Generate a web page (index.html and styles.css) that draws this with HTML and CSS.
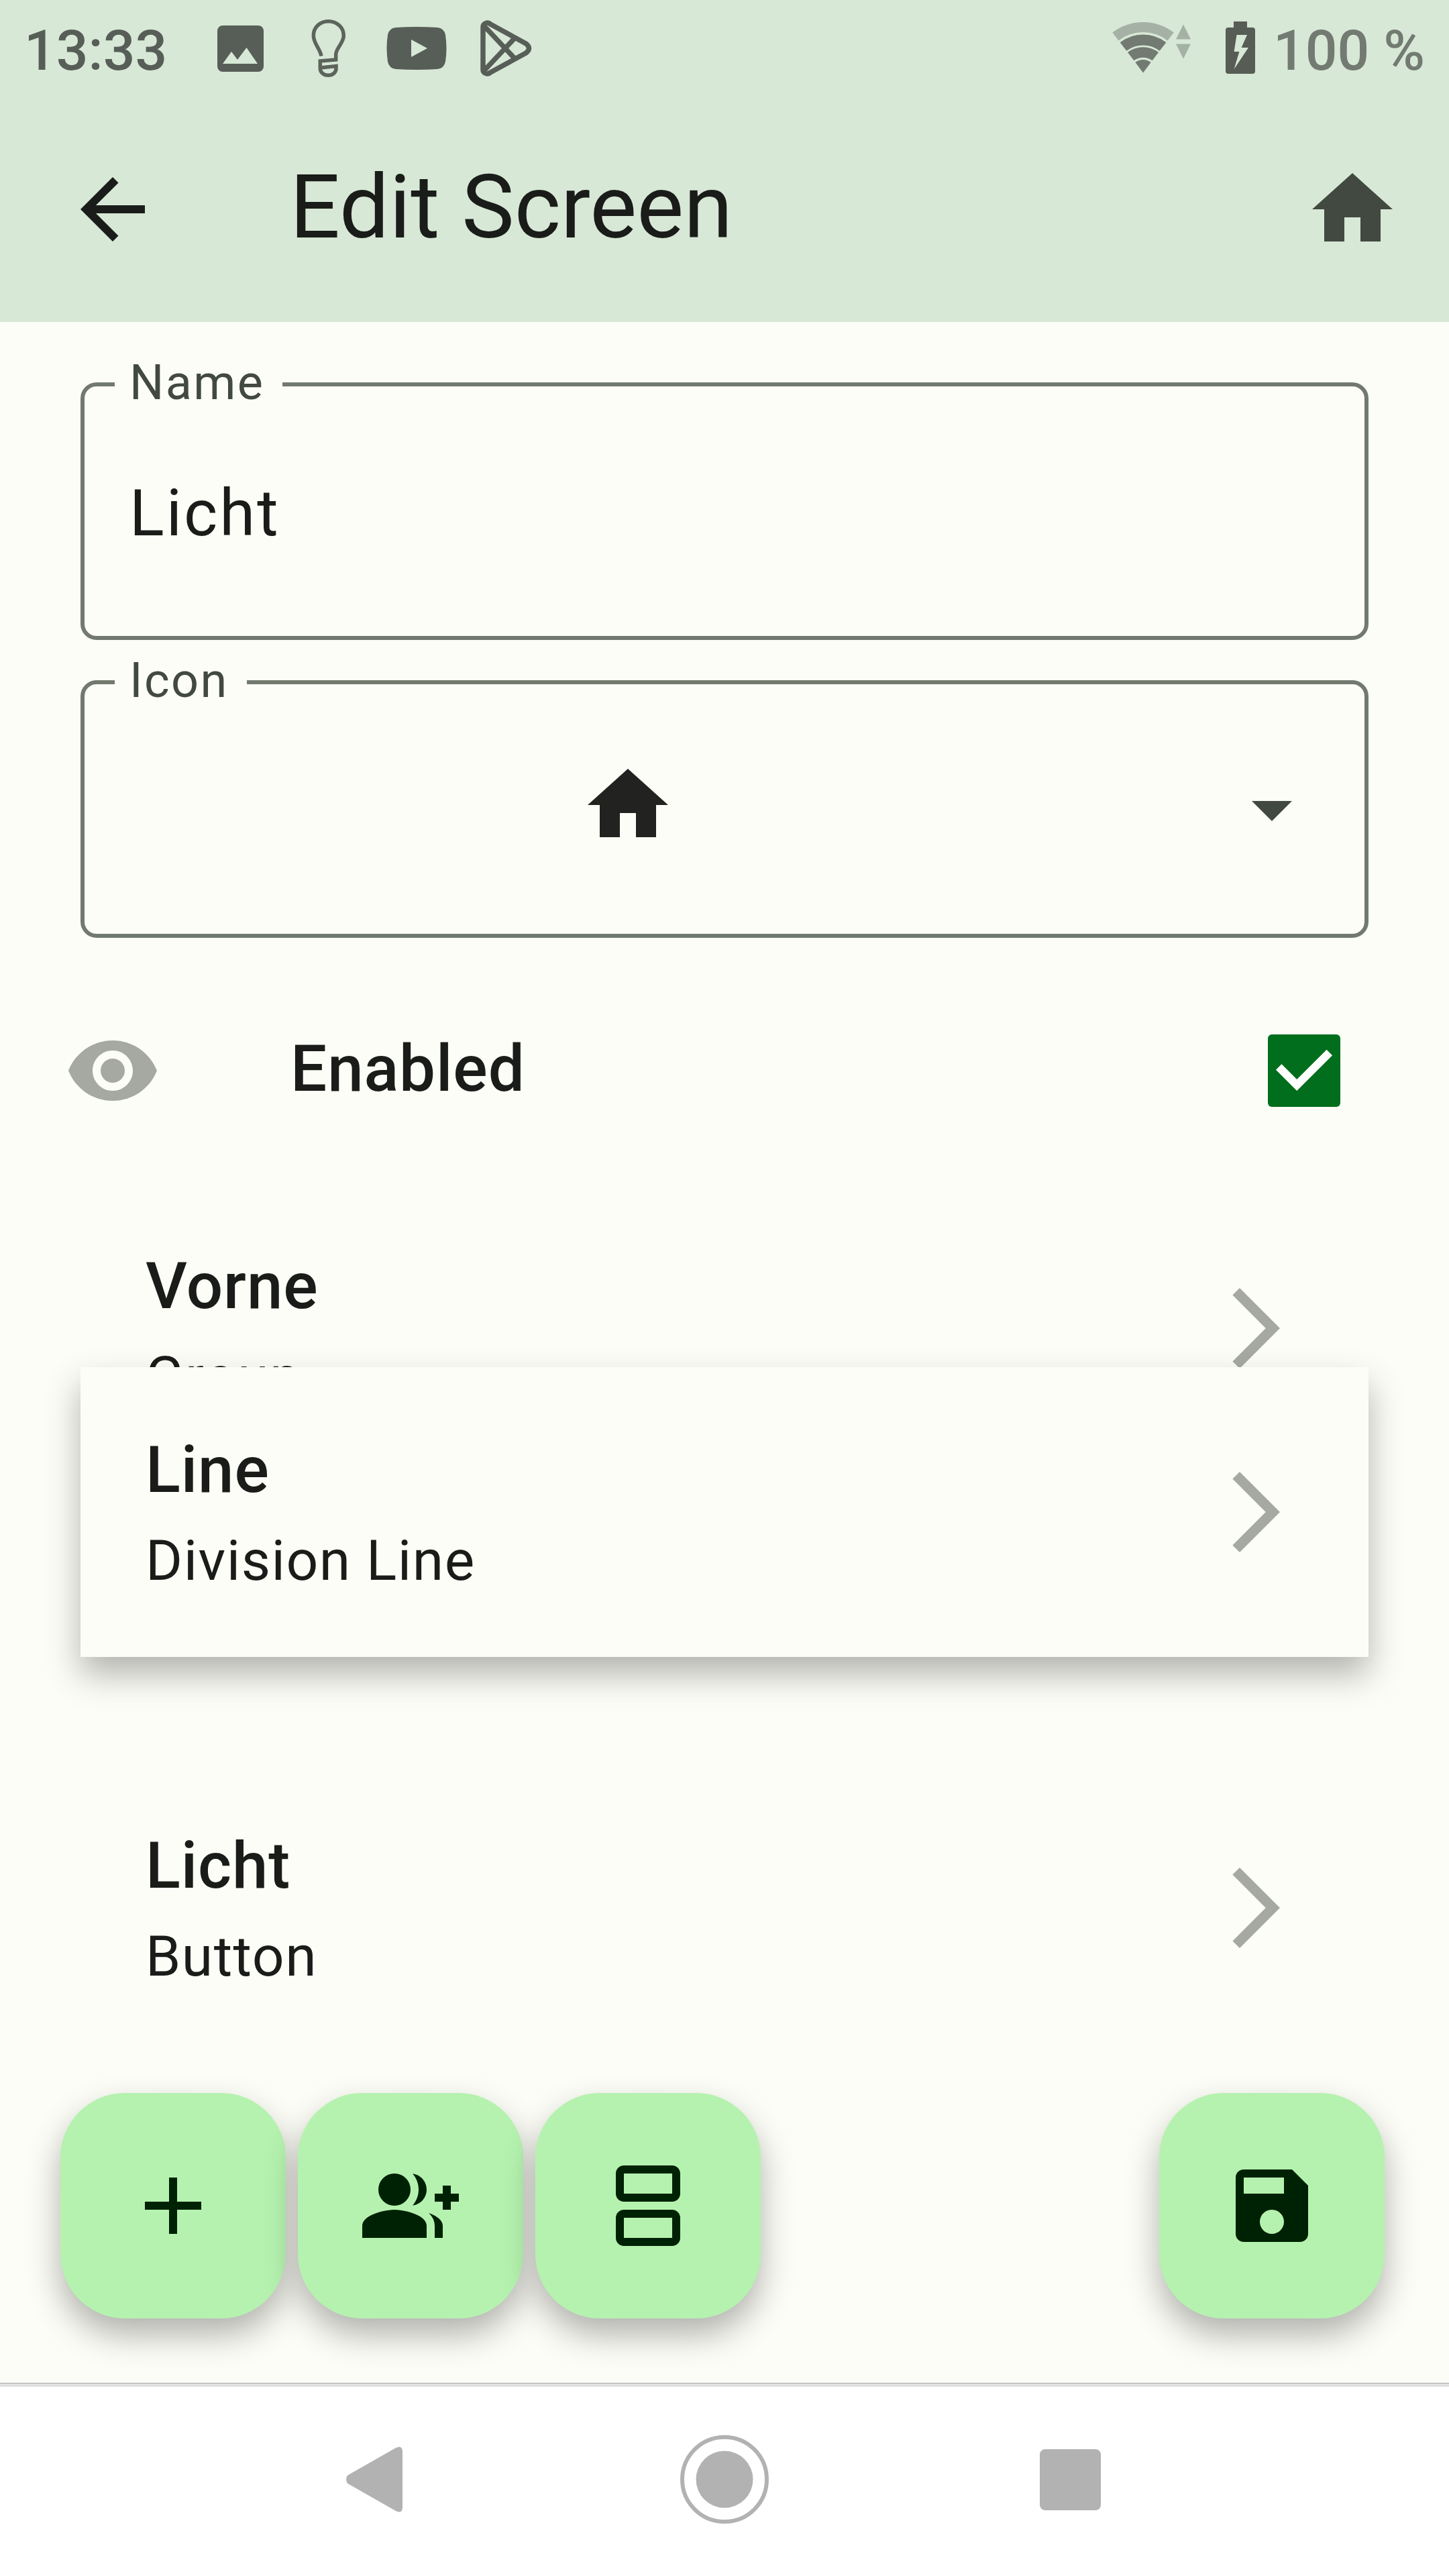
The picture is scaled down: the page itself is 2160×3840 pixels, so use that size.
FILE: index.html
```html
<!DOCTYPE html>
<html lang="en">
<head>
<meta charset="utf-8">
<title>Edit Screen</title>
<link rel="stylesheet" href="styles.css">
</head>
<body>
<div class="screen">
  <header class="top">
    <div class="status">
      <div class="status-left">
        <span class="clock">13:33</span>
        <svg class="notif" width="480" height="96" viewBox="320 24 480 96" fill="#575e57">
          <path fill-rule="evenodd" d="M332 38h53a8 8 0 0 1 8 8v53a8 8 0 0 1-8 8h-53a8 8 0 0 1-8-8V46a8 8 0 0 1 8-8zM332 95h52l-16.500-24-13.500 18-9-12z"/>
          <path fill="none" stroke="#5c645c" stroke-width="5.500" d="M479 83.500C477 72 467.300 65 467.300 53C467.300 41 477 31.700 489.500 31.700S512.300 41 512.300 53C512.300 64 500.700 72 500.700 81V89L477.300 91V102C477.300 108 482.500 112.300 489.300 112.300S501 108 501 102V98.500L478 101"/>
          <path fill-rule="evenodd" d="M590 41Q621 39 652 41Q662 42 664 52Q667 72 664 92Q662 102 652 103Q621 105 590 103Q580 102 578 92Q575 72 578 52Q580 42 590 41zM613 59v26l24-13z"/>
          <path fill="none" stroke="#575e57" stroke-width="7.500" stroke-linejoin="round" d="M720 40C720 35 727 32 731 36L784 65Q793 72 784 79L731 108C727 112 720 109 720 104zM721 38L753 72L768 88M721 106L753 72L768 56"/>
        </svg>
      </div>
      <div class="status-right">
        <svg width="216" height="96" viewBox="1656 24 216 96">
          <g fill="none" stroke="#727a72">
            <path stroke="#a5b1a5" stroke-width="15" d="M1661.900 54.500A67.500 67.500 0 0 1 1744.100 54.500"/>
            <path stroke-width="16" d="M1673.500 69.500A48.500 48.500 0 0 1 1732.500 69.500"/>
            <path stroke-width="15.500" d="M1684.700 84.200A30 30 0 0 1 1721.300 84.200"/>
          </g>
          <path fill="#727a72" d="M1703 108.500L1691.400 93A19 19 0 0 1 1714.600 93z"/>
          <path fill="#a5b1a5" d="M1763 36.500l11 22h-22zM1752 65.500h22l-11 22z"/>
          <path fill="#575c55" fill-rule="evenodd" d="M1838 32h20v9h8a4 4 0 0 1 4 4v61a4 4 0 0 1-4 4h-36a4 4 0 0 1-4-4v-61a4 4 0 0 1 4-4h8zM1842.500 52L1838.600 77H1846.400L1838.600 103L1860 71H1849.600L1858 52z"/>
        </svg>
        <span class="battery">100 %</span>
      </div>
    </div>
    <div class="appbar">
      <svg class="icon" viewBox="0 0 24 24" fill="#1a1c19"><path d="M20 11H7.830l5.590-5.590L12 4l-8 8 8 8 1.410-1.410L7.830 13H20z"/></svg>
      <h1 class="title">Edit Screen</h1>
      <svg class="icon" viewBox="0 0 24 24" fill="#424940"><path d="M10 20v-6h4v6h5v-8h3L12 3 2 12h3v8z"/></svg>
    </div>
  </header>

  <main class="content">
    <fieldset class="field">
      <legend>Name</legend>
      <div class="field-text">Licht</div>
    </fieldset>
    <fieldset class="field field-second">
      <legend>Icon</legend>
      <div class="field-select">
        <svg class="icon" viewBox="0 0 24 24" fill="#222220"><path d="M10 20v-6h4v6h5v-8h3L12 3 2 12h3v8z"/></svg>
        <svg class="icon drop" viewBox="0 0 24 24" fill="#424940"><path d="M7 10l5 5 5-5z"/></svg>
      </div>
    </fieldset>

    <div class="enabled">
      <svg class="icon" viewBox="0 0 24 24" fill="#a6a9a1"><path d="M12 4.500C7 4.500 2.730 7.610 1 12c1.730 4.390 6 7.500 11 7.500s9.270-3.110 11-7.500c-1.730-4.390-6-7.500-11-7.500zM12 17c-2.760 0-5-2.240-5-5s2.240-5 5-5 5 2.240 5 5-2.240 5-5 5zm0-8c-1.660 0-3 1.340-3 3s1.340 3 3 3 3-1.340 3-3-1.340-3-3-3z"/></svg>
      <span class="enabled-label">Enabled</span>
      <svg class="checkbox" viewBox="0 0 108 108"><rect width="108" height="108" rx="6" fill="#006e1c"/><path fill="none" stroke="#fff" stroke-width="12" d="M16.200 48.600L43.200 75.600L91.800 27"/></svg>
    </div>

    <div class="list">
      <div class="item">
        <div class="item-text"><span class="item-title">Vorne</span><span class="item-sub">Group</span></div>
        <svg class="icon" viewBox="0 0 24 24" fill="#a6a9a1"><path d="M6.230 20.230L8 22l10-10L8 2 6.230 3.770 14.460 12z"/></svg>
      </div>
      <div class="slot">
        <div class="item dragged">
          <div class="item-text"><span class="item-title">Line</span><span class="item-sub">Division Line</span></div>
          <svg class="icon" viewBox="0 0 24 24" fill="#a6a9a1"><path d="M6.230 20.230L8 22l10-10L8 2 6.230 3.770 14.460 12z"/></svg>
        </div>
      </div>
      <div class="item">
        <div class="item-text"><span class="item-title">Licht</span><span class="item-sub">Button</span></div>
        <svg class="icon" viewBox="0 0 24 24" fill="#a6a9a1"><path d="M6.230 20.230L8 22l10-10L8 2 6.230 3.770 14.460 12z"/></svg>
      </div>
    </div>
  </main>

  <div class="actions">
    <div class="fab"><svg class="icon" viewBox="0 0 24 24"><path d="M19 13h-6v6h-2v-6H5v-2h6V5h2v6h6z"/></svg></div>
    <div class="fab"><svg class="icon" viewBox="0 0 24 24"><circle cx="8" cy="8" r="4"/><path d="M8 13c-2.670 0-8 1.340-8 4v3h16v-3c0-2.660-5.330-4-8-4zM12.510 4.050C13.430 5.110 14 6.490 14 8s-.57 2.890-1.490 3.950C14.470 11.700 16 10.040 16 8s-1.530-3.700-3.490-3.950zM16.530 13.830C17.420 14.660 18 15.700 18 17v3h2v-3c0-1.450-1.590-2.510-3.470-3.170zM22 9V7h-2v2h-2v2h2v2h2v-2h2V9z"/></svg></div>
    <div class="fab"><svg class="icon" viewBox="0 0 24 24"><path d="M18 4v5H6V4h12m0-2H6c-1.100 0-2 .9-2 2v5c0 1.100.9 2 2 2h12c1.100 0 2-.9 2-2V4c0-1.100-.9-2-2-2zm0 13v5H6v-5h12m0-2H6c-1.100 0-2 .9-2 2v5c0 1.100.9 2 2 2h12c1.100 0 2-.9 2-2v-5c0-1.100-.9-2-2-2z"/></svg></div>
    <div class="fab fab-save"><svg class="icon" viewBox="0 0 24 24"><path d="M17 3H5c-1.110 0-2 .9-2 2v14c0 1.100.89 2 2 2h14c1.100 0 2-.9 2-2V7l-4-4zm-5 16c-1.660 0-3-1.340-3-3s1.340-3 3-3 3 1.340 3 3-1.340 3-3 3zm3-10H5V5h10v4z"/></svg></div>
  </div>

  <nav class="navbar">
    <svg width="84" height="98" viewBox="0 0 84 98"><path d="M2 43L74 2Q84-3 84 8V90Q84 101 74 96L2 55Q-2 49 2 43z"/></svg>
    <svg class="nav-home" width="132" height="132" viewBox="0 0 132 132"><circle cx="66" cy="66" r="42.500"/><circle cx="66" cy="66" r="63" fill="none" stroke="#b2b2b2" stroke-width="6"/></svg>
    <svg width="91" height="91" viewBox="0 0 91 91"><rect width="91" height="91" rx="8"/></svg>
  </nav>
</div>
</body>
</html>
```
FILE: styles.css
```css
* { box-sizing: border-box; }

body {
  margin: 0;
  background: #fcfdf6;
  color: #1a1c19;
  font-family: Roboto, "Liberation Sans", sans-serif;
}

svg { display: block; flex: none; }

.screen {
  width: 2160px;
  height: 3840px;
  display: flex;
  flex-direction: column;
  overflow: hidden;
}

.icon { width: 144px; height: 144px; }

.top { height: 480px; background: #d7e8d6; }

.status {
  height: 144px;
  display: flex;
  justify-content: space-between;
  padding: 0 36px;
  font-size: 84px;
  font-weight: 500;
  line-height: 152px;
}

.status-left, .status-right { display: flex; }
.status svg { margin-top: 24px; }
.clock { width: 284px; color: #575e57; white-space: nowrap; }
.battery { margin-left: 25px; color: #727a72; white-space: nowrap; }

.appbar {
  height: 336px;
  display: flex;
  align-items: center;
  padding: 0 72px 0 96px;
}

.title {
  flex: 1;
  margin: 0 0 0 192px;
  padding-bottom: 6px;
  font-size: 132px;
  font-weight: 400;
  line-height: 168px;
}

.content { padding: 51px 120px 0; }

.field {
  margin: 0;
  padding: 0;
  height: 423px;
  border: 6px solid #72796f;
  border-radius: 24px;
}

.field-second { margin-top: 21px; }

.field legend {
  margin-left: 45px;
  padding: 0 27px 4px 22px;
  color: #424940;
  font-size: 72px;
  line-height: 80px;
  letter-spacing: 2.4px;
}

.field-text {
  padding-left: 67px;
  font-size: 96px;
  line-height: 300px;
  letter-spacing: 3px;
}

.field-select {
  height: 282px;
  display: flex;
  align-items: center;
  justify-content: space-between;
  padding: 0 66px 0 738px;
}

.drop { margin-top: 12px; }

.enabled {
  height: 144px;
  margin: 126px 42px 0 -24px;
  display: flex;
  align-items: center;
}

.enabled-label {
  flex: 1;
  margin-left: 193px;
  padding-bottom: 6px;
  font-size: 96px;
  font-weight: 500;
  letter-spacing: 0.9px;
}

.checkbox { width: 108px; height: 108px; }

.list { margin-top: 96px; }

.item {
  height: 432px;
  display: flex;
  align-items: center;
  justify-content: space-between;
  padding: 0 96px 0 97px;
}

.item-text {
  align-self: flex-start;
  display: flex;
  flex-direction: column;
  gap: 4px;
  padding-top: 81px;
}

.item-title {
  font-size: 96px;
  font-weight: 500;
  line-height: 144px;
  letter-spacing: 0.9px;
}

.item-sub {
  font-size: 84px;
  line-height: 120px;
  letter-spacing: 1.5px;
}

.slot { position: relative; height: 432px; }

.dragged {
  position: absolute;
  top: -158px;
  left: 0;
  width: 100%;
  background: #fcfdf6;
  box-shadow: 0 26px 48px rgba(0, 0, 0, 0.29);
}

.actions {
  display: flex;
  gap: 18px;
  padding: 60px 96px 96px 90px;
}

.fab {
  width: 336px;
  height: 336px;
  display: flex;
  align-items: center;
  justify-content: center;
  border-radius: 96px;
  background: #b5f2af;
  fill: #002204;
  box-shadow: 0 24px 50px rgba(0, 0, 0, 0.3);
}

.fab-save { margin-left: auto; }

.navbar {
  height: 288px;
  display: flex;
  align-items: center;
  padding: 0 519px 0 516px;
  background: #fff;
  fill: #b2b2b2;
  box-shadow: inset 0 1px #a8a8a8, inset 0 6px #e0e0e0;
}

.nav-home { margin: 0 404px 0 414px; }
```
